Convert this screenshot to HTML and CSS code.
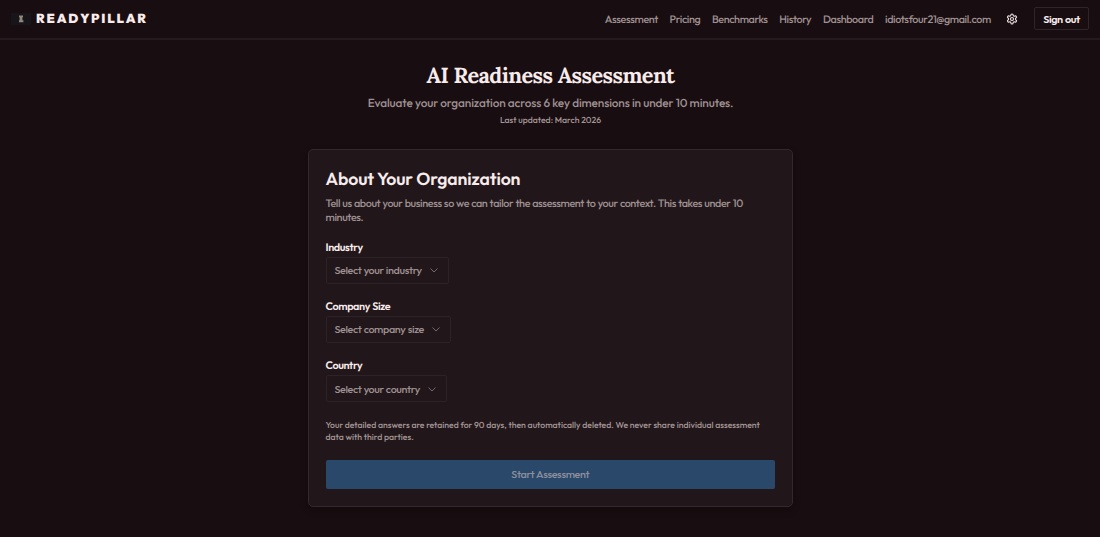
FILE: index.html
```
<!DOCTYPE html>
<html lang="en">
<head>
    <meta charset="UTF-8">
    <meta name="viewport" content="width=device-width, initial-scale=1.0">
    <title>AI Readiness Assessment</title>
    <link rel="stylesheet" href="styles.css">
</head>
<body>
    <header class="site-header">
        <a href="#" class="brand">
            <svg class="brand-mark" width="20" height="12" viewBox="0 0 20 12">
                <rect width="20" height="12" fill="#17151a"/>
                <path d="M8 2.5h4v1.7H8zM8.6 4h2.8v3.6H8.6zM8 7.3h4.4v1.9H8z" fill="#8f8674"/>
            </svg>
            <span class="brand-name">READYPILLAR</span>
        </a>
        <nav class="nav">
            <a href="#">Assessment</a>
            <a href="#">Pricing</a>
            <a href="#">Benchmarks</a>
            <a href="#">History</a>
            <a href="#">Dashboard</a>
            <span>idiotsfour21@gmail.com</span>
            <button class="icon-btn" aria-label="Settings">
                <svg width="12" height="12" viewBox="0 0 24 24" fill="none" stroke="currentColor" stroke-width="2.2" stroke-linecap="round" stroke-linejoin="round">
                    <path d="M12.22 2h-.44a2 2 0 0 0-2 2v.18a2 2 0 0 1-1 1.73l-.43.25a2 2 0 0 1-2 0l-.15-.08a2 2 0 0 0-2.73.73l-.22.38a2 2 0 0 0 .73 2.73l.15.1a2 2 0 0 1 1 1.72v.51a2 2 0 0 1-1 1.74l-.15.09a2 2 0 0 0-.73 2.73l.22.38a2 2 0 0 0 2.73.73l.15-.08a2 2 0 0 1 2 0l.43.25a2 2 0 0 1 1 1.73V20a2 2 0 0 0 2 2h.44a2 2 0 0 0 2-2v-.18a2 2 0 0 1 1-1.73l.43-.25a2 2 0 0 1 2 0l.15.08a2 2 0 0 0 2.73-.73l.22-.39a2 2 0 0 0-.73-2.73l-.15-.08a2 2 0 0 1-1-1.74v-.5a2 2 0 0 1 1-1.74l.15-.09a2 2 0 0 0 .73-2.73l-.22-.38a2 2 0 0 0-2.73-.73l-.15.08a2 2 0 0 1-2 0l-.43-.25a2 2 0 0 1-1-1.73V4a2 2 0 0 0-2-2z"/>
                    <circle cx="12" cy="12" r="3"/>
                </svg>
            </button>
            <button class="signout-btn">Sign out</button>
        </nav>
    </header>

    <main class="page">
        <div class="intro">
            <h1>AI Readiness Assessment</h1>
            <p class="subtitle">Evaluate your organization across 6 key dimensions in under 10 minutes.</p>
            <p class="updated">Last updated: March 2026</p>
        </div>

        <section class="card">
            <h2>About Your Organization</h2>
            <p class="card-text">Tell us about your business so we can tailor the assessment to your context. This takes under 10 <br>minutes.</p>

            <div class="field">
                <label>Industry</label>
                <button class="select select-industry">
                    <span>Select your industry</span>
                    <svg class="chevron" width="12" height="12" viewBox="0 0 24 24"><path d="m5 9 7 7 7-7"/></svg>
                </button>
            </div>
            <div class="field">
                <label>Company Size</label>
                <button class="select select-size">
                    <span>Select company size</span>
                    <svg class="chevron" width="12" height="12" viewBox="0 0 24 24"><path d="m5 9 7 7 7-7"/></svg>
                </button>
            </div>
            <div class="field">
                <label>Country</label>
                <button class="select select-country">
                    <span>Select your country</span>
                    <svg class="chevron" width="12" height="12" viewBox="0 0 24 24"><path d="m5 9 7 7 7-7"/></svg>
                </button>
            </div>

            <p class="notice">Your detailed answers are retained for 90 days, then automatically deleted. We never share individual assessment <br>data with third parties.</p>
            <button class="start-btn" disabled>Start Assessment</button>
        </section>
    </main>
</body>
</html>
```
FILE: styles.css
```
* {
    margin: 0;
    padding: 0;
    box-sizing: border-box;
}

body {
    font-family: Outfit, Lato, sans-serif;
    font-size: 10.8px;
    font-weight: 500;
    letter-spacing: -0.38px;
    word-spacing: 0.4px;
    text-rendering: geometricPrecision;
    background: #180d10;
    color: #f8ebeb;
    min-height: 100vh;
    overflow: hidden;
}

a {
    color: inherit;
    text-decoration: none;
}

button {
    font: inherit;
    letter-spacing: inherit;
    word-spacing: inherit;
    color: inherit;
    background: none;
    border: none;
}

.site-header {
    display: flex;
    align-items: center;
    justify-content: space-between;
    height: 40px;
    padding: 0 11px 1px;
    border-bottom: 2px solid #251a1d;
}

.brand {
    display: flex;
    align-items: center;
    gap: 5px;
}

.brand-name {
    font-size: 13px;
    font-weight: 900;
    letter-spacing: 1.9px;
    padding-top: 1px;
}

.nav {
    display: flex;
    align-items: center;
    gap: 11.6px;
    color: #9f9091;
    white-space: nowrap;
}

.icon-btn {
    display: flex;
    color: #f0e3e3;
    margin: 0 4px;
}

.signout-btn {
    width: 55px;
    height: 23px;
    border: 1px solid #2f2427;
    border-radius: 2px;
    color: #f8ebeb;
    font-weight: 600;
}

.page {
    width: 485px;
    margin: 0 auto;
    position: relative;
    left: 0.5px;
}

.intro {
    height: 109px;
    padding-top: 21px;
    text-align: center;
    white-space: nowrap;
}

.intro h1 {
    font-family: Lora, "Liberation Serif", serif;
    font-size: 21.66px;
    line-height: 29px;
    font-weight: 700;
    letter-spacing: -0.54px;
    word-spacing: 0;
}

.subtitle {
    font-size: 11.8px;
    line-height: 20px;
    letter-spacing: -0.11px;
    word-spacing: 0;
    margin-top: 4px;
    color: #9f9091;
}

.updated {
    font-size: 8.66px;
    line-height: 14px;
    letter-spacing: 0;
    word-spacing: 0;
    color: #a59697;
}

.card {
    height: 358px;
    padding: 16.5px 16.5px 0;
    background: #21171a;
    border: 1px solid #33282b;
    border-radius: 5px;
    box-shadow: 0 3px 8px rgba(0, 0, 0, 0.2);
}

.card h2 {
    font-size: 17.6px;
    line-height: 24px;
    font-weight: 600;
    letter-spacing: -0.1px;
    word-spacing: 0;
}

.card-text {
    margin-top: 5px;
    line-height: 14.5px;
    color: #9f9091;
    white-space: nowrap;
}

.field {
    margin-top: 15px;
    height: 44.3px;
}

.field label {
    display: block;
    font-weight: 600;
    line-height: 14px;
}

.select {
    display: flex;
    align-items: center;
    justify-content: space-between;
    height: 27px;
    margin-top: 3px;
    padding: 0 8px;
    border: 1px solid #2d2326;
    border-radius: 2px;
    color: #9f9091;
    white-space: nowrap;
}

.select-industry {
    width: 123px;
}

.select-size {
    width: 125px;
}

.select-country {
    width: 121px;
}

.chevron {
    fill: none;
    stroke: #75686b;
    stroke-width: 2;
}

.notice {
    margin-top: 18px;
    font-size: 8.66px;
    line-height: 11.5px;
    letter-spacing: 0;
    word-spacing: 0;
    color: #a59697;
    white-space: nowrap;
}

.start-btn {
    display: block;
    width: 449.5px;
    height: 29px;
    margin-top: 16.5px;
    background: #29486a;
    border-radius: 2px;
    color: #8e8f9c;
}
```
